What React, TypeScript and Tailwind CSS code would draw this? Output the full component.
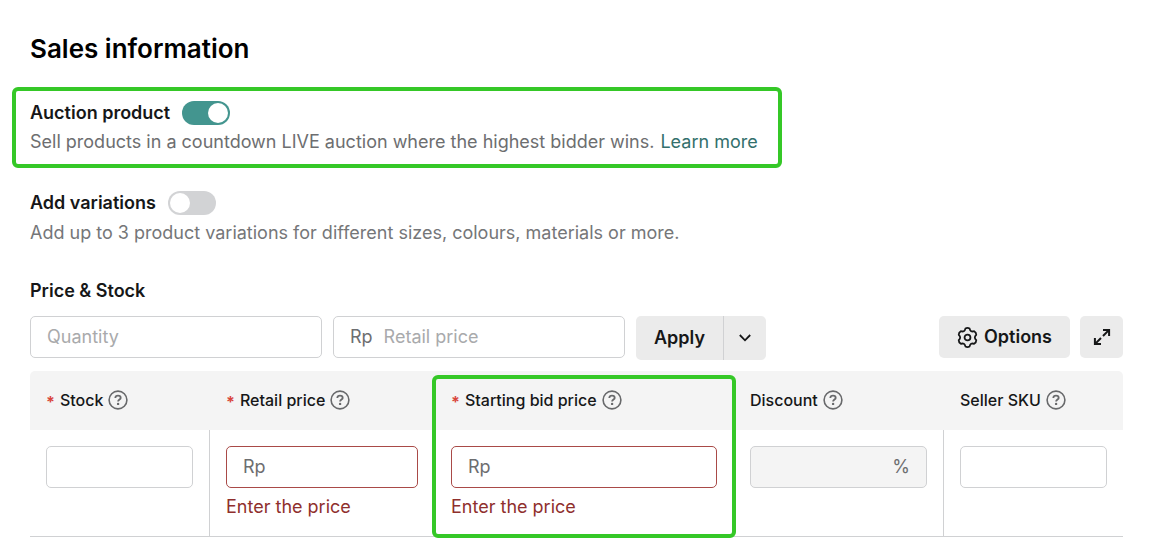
import { useState } from "react";
import type { ReactNode } from "react";

function HelpIcon() {
  return (
    <svg className="size-5 shrink-0 text-[#68696b]" viewBox="0 0 20 20" fill="none" stroke="currentColor" aria-hidden="true">
      <circle cx="10" cy="10" r="8.9" strokeWidth="1.6" />
      <path d="M7.300 8C7.400 6.600 8.500 5.700 10 5.700s2.700.9 2.700 2.200c0 1.600-2.600 1.700-2.600 3.600" strokeWidth="1.8" />
      <circle cx="10.1" cy="13.900" r="1.200" fill="currentColor" stroke="none" />
    </svg>
  );
}

function GearIcon() {
  return (
    <svg className="size-[21px] shrink-0" viewBox="0 0 20 20" fill="none" stroke="currentColor" strokeWidth="1.7" strokeLinejoin="round" aria-hidden="true">
      <path d="M8 1.500Q10 .3 12 1.500Q12.800 5.150 16.360 4.020Q18.400 5.150 18.360 7.480Q15.600 10 18.360 12.520Q18.400 14.850 16.360 15.980Q12.800 14.850 12 18.500Q10 19.700 8 18.500Q7.200 14.850 3.640 15.980Q1.600 14.850 1.640 12.520Q4.400 10 1.640 7.480Q1.600 5.150 3.640 4.020Q7.200 5.150 8 1.500Z" />
      <circle cx="10" cy="10" r="2.8" />
    </svg>
  );
}

function ExpandIcon() {
  return (
    <svg className="size-[18px]" viewBox="0 0 18 18" fill="none" stroke="currentColor" strokeWidth="2" aria-hidden="true">
      <path d="M10 1.900H16.100V8M16.100 1.900L10 8M8 16.100H1.900V10M1.900 16.100L8 10" />
    </svg>
  );
}

function Toggle({ id, checked, onChange }: { id: string; checked: boolean; onChange: (on: boolean) => void }) {
  return (
    <input
      id={id}
      type="checkbox"
      role="switch"
      checked={checked}
      onChange={(e) => onChange(e.target.checked)}
      className="h-6 w-12 shrink-0 cursor-pointer appearance-none rounded-full bg-[#d2d3d5] p-0.5 before:block before:size-5 before:rounded-full before:bg-white checked:bg-[#43958f] checked:before:ml-auto"
    />
  );
}

type FieldProps = {
  label: string;
  placeholder?: string;
  prefix?: string;
  suffix?: string;
  invalid?: boolean;
  disabled?: boolean;
};

function Field({ label, placeholder, prefix, suffix, invalid, disabled }: FieldProps) {
  const tone = invalid ? "border-[#a94a47]" : "border-[#d0d1d3]";
  const fill = disabled ? "bg-[#f4f4f4]" : "bg-white";
  return (
    <label className={`flex h-[42px] w-full items-center gap-[11px] rounded-[5px] border px-4 text-lg text-[#6d6e70] ${tone} ${fill}`}>
      {prefix && <span>{prefix}</span>}
      <input
        type="text"
        aria-label={label}
        aria-invalid={invalid}
        disabled={disabled}
        placeholder={placeholder}
        className="w-0 min-w-0 flex-1 bg-transparent text-[#161718] outline-none placeholder:text-[#a9aaac]"
      />
      {suffix && <span>{suffix}</span>}
    </label>
  );
}

function HeadCell({ title, required, children }: { title: string; required?: boolean; children?: ReactNode }) {
  return (
    <th scope="col" className="relative h-[59px] px-4 pb-0.5 text-left font-medium">
      <div className="flex items-center whitespace-nowrap">
        {required && <span className="mr-[5px] pt-1 font-bold text-[#d9453c]">*</span>}
        <span className="mr-[5px]">{title}</span>
        <HelpIcon />
      </div>
      {children}
    </th>
  );
}

const cell = "border-r border-[#d0d1d3] p-4 align-top last:border-r-0";

export default function App() {
  const [auction, setAuction] = useState(true);
  const [variations, setVariations] = useState(false);

  return (
    <main className="bg-white pt-8 pr-[27px] pb-3 pl-[30px] font-['Inter',sans-serif] text-[#161718]">
      <h1 className="text-[26px] leading-[34px] font-semibold text-black">Sales information</h1>

      <section className="mt-[21px] -ml-[18px] w-fit rounded-md border-4 border-[#35c827] pt-2.5 pr-5 pb-2.5 pl-3.5">
        <div className="flex items-center gap-3">
          <label htmlFor="auction" className="text-lg leading-6 font-semibold">Auction product</label>
          <Toggle id="auction" checked={auction} onChange={setAuction} />
        </div>
        <p className="mt-1 flex gap-1.5 text-lg leading-[25px] text-[#6d6e70]">
          Sell products in a countdown LIVE auction where the highest bidder wins.
          <a href="#learn-more" className="text-[#33706c]">Learn more</a>
        </p>
      </section>

      <section className="mt-[23px]">
        <div className="flex items-center gap-3">
          <label htmlFor="variations" className="text-lg leading-6 font-semibold">Add variations</label>
          <Toggle id="variations" checked={variations} onChange={setVariations} />
        </div>
        <p className="mt-[5px] text-lg leading-[25px] text-[#757678]">
          Add up to 3 product variations for different sizes, colours, materials or more.
        </p>
      </section>

      <section className="mt-[34px]">
        <h2 className="text-lg leading-6 font-semibold">Price &amp; Stock</h2>

        <div className="mt-[13px] flex items-start gap-2.5">
          <div className="flex min-w-0 flex-1 gap-[11px]">
            <div className="w-[292px]"><Field label="Quantity" placeholder="Quantity" /></div>
            <div className="w-[292px]"><Field label="Retail price" placeholder="Retail price" prefix="Rp" /></div>
            <div className="flex h-11 overflow-hidden rounded-[5px] bg-[#ebebeb]">
              <button type="button" className="border-r border-[#d0d1d3] px-[18px] text-lg font-semibold">Apply</button>
              <button type="button" aria-label="More apply options" className="flex w-[42px] items-center justify-center">
                <svg className="h-2 w-3" viewBox="0 0 12 8" fill="none" stroke="currentColor" strokeWidth="1.8" aria-hidden="true">
                  <path d="M.8 1L6 6.300 11.200 1" />
                </svg>
              </button>
            </div>
          </div>
          <button type="button" className="flex h-[42px] items-center gap-1.5 rounded-[5px] bg-[#ebebeb] px-[18px] text-lg font-semibold">
            <GearIcon />
            Options
          </button>
          <button type="button" aria-label="Expand table" className="flex h-[42px] w-[43px] items-center justify-center rounded-[5px] bg-[#ebebeb]">
            <ExpandIcon />
          </button>
        </div>

        <table className="mt-[11px] w-full table-fixed border-separate border-spacing-0">
          <colgroup>
            <col className="w-[180px]" />
            <col className="w-[225px]" />
            <col />
            <col className="w-[210px]" />
            <col className="w-[179px]" />
          </colgroup>
          <thead className="text-base *:*:bg-[#f4f4f4] *:*:first:rounded-tl-[5px] *:*:last:rounded-tr-[5px]">
            <tr>
              <HeadCell title="Stock" required />
              <HeadCell title="Retail price" required />
              <HeadCell title="Starting bid price" required>
                <div className="pointer-events-none absolute top-1 -right-0.5 -left-[3px] z-10 h-[163px] rounded-md border-4 border-[#35c827]" />
              </HeadCell>
              <HeadCell title="Discount" />
              <HeadCell title="Seller SKU" />
            </tr>
          </thead>
          <tbody className="text-lg *:*:h-[107px] *:*:border-b">
            <tr>
              <td className={cell}><Field label="Stock" /></td>
              <td className={cell}>
                <Field label="Retail price" prefix="Rp" invalid />
                <p className="mt-1.5 leading-[25px] text-[#8f2f2d]">Enter the price</p>
              </td>
              <td className={cell}>
                <Field label="Starting bid price" prefix="Rp" invalid />
                <p className="mt-1.5 leading-[25px] text-[#8f2f2d]">Enter the price</p>
              </td>
              <td className={cell}><Field label="Discount" suffix="%" disabled /></td>
              <td className={cell}><Field label="Seller SKU" /></td>
            </tr>
          </tbody>
        </table>
      </section>
    </main>
  );
}
